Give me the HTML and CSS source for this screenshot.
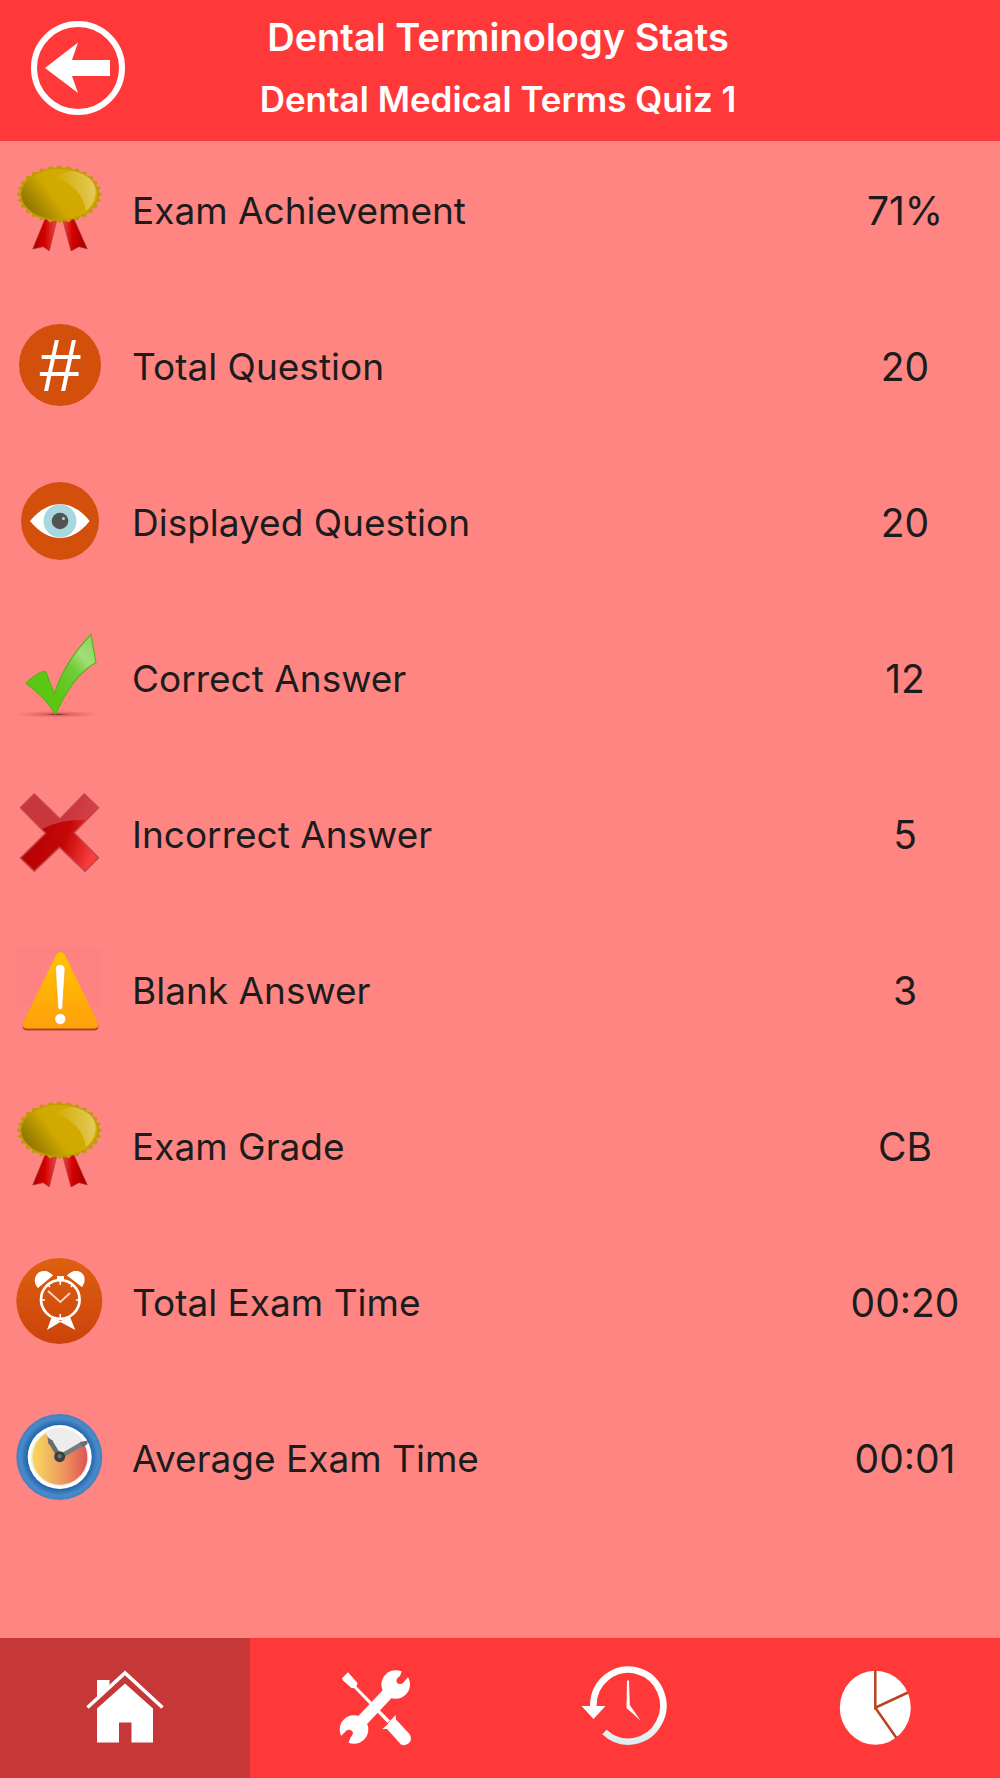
FILE: index.html
```html
<!DOCTYPE html>
<html lang="en">
<head>
    <meta charset="UTF-8">
    <meta name="viewport" content="width=device-width, initial-scale=1.0">
    <title>Dental Terminology Stats</title>
    <link rel="stylesheet" href="styles.css">
</head>

<body>
    <!-- Badge is used twice, so it lives here -->
    <svg class="sprite" aria-hidden="true">
        <defs>
            <linearGradient id="gold" x1="0" y1="0.7" x2="1" y2="0.2">
                <stop offset="0" stop-color="#8a7000"/>
                <stop offset="0.4" stop-color="#d0a800"/>
                <stop offset="1" stop-color="#d6ae00"/>
            </linearGradient>
            <linearGradient id="shine" x1="0" y1="0.5" x2="1" y2="0.4">
                <stop offset="0" stop-color="#fff" stop-opacity="0"/>
                <stop offset="1" stop-color="#fff" stop-opacity="0.35"/>
            </linearGradient>
            <linearGradient id="ribbonLeft">
                <stop offset="0" stop-color="#a80000"/>
                <stop offset="0.5" stop-color="#d40000"/>
                <stop offset="1" stop-color="#e84a4a"/>
            </linearGradient>
            <linearGradient id="ribbonRight">
                <stop offset="0" stop-color="#e84a4a"/>
                <stop offset="0.4" stop-color="#d40000"/>
                <stop offset="1" stop-color="#a00000"/>
            </linearGradient>
            <polygon id="teeth" points="100,0 0,100 -100,0 0,-100"/>
            <symbol id="badge" viewBox="0 0 86 86">
                <path d="M29 54L41 54L33.3 86L27.3 81.7L16.7 84Z" fill="url(#ribbonLeft)" stroke="#a33" stroke-width="0.6"/>
                <path d="M46.5 54L58 54L71.3 84L63 81.7L55 86Z" fill="url(#ribbonRight)" stroke="#a33" stroke-width="0.6"/>
                <g transform="translate(43.3 29.3) scale(0.43 0.29)" fill="#c09a08">
                    <use href="#teeth"/>
                    <use href="#teeth" transform="rotate(12.857)"/>
                    <use href="#teeth" transform="rotate(25.714)"/>
                    <use href="#teeth" transform="rotate(38.571)"/>
                    <use href="#teeth" transform="rotate(51.429)"/>
                    <use href="#teeth" transform="rotate(64.286)"/>
                    <use href="#teeth" transform="rotate(77.143)"/>
                </g>
                <ellipse cx="43.3" cy="29.3" rx="38" ry="25.5" fill="url(#gold)"/>
                <path d="M38 14C52 15 68 28 70 46C82 36 83 20 72 12C62 5 48 4 38 14Z" fill="url(#shine)"/>
            </symbol>
        </defs>
    </svg>

    <header class="header">
        <button class="back-button" type="button" aria-label="Back">
            <svg viewBox="0 0 94 94" width="94" height="94">
                <circle cx="47" cy="47" r="44" fill="none" stroke="#fff" stroke-width="6"/>
                <path d="M14 47L47 21.500L41 39H79V55H41L47 72Z" fill="#fff"/>
            </svg>
        </button>
        <div class="titles">
            <h1>Dental Terminology Stats</h1>
            <h2>Dental Medical Terms Quiz 1</h2>
        </div>
    </header>

    <main class="content">
        <table class="stats">
            <tbody>
                <tr>
                    <td class="icon"><svg viewBox="0 0 86 86"><use href="#badge"/></svg></td>
                    <th scope="row">Exam Achievement</th>
                    <td class="value">71%</td>
                </tr>
                <tr>
                    <td class="icon">
                        <svg viewBox="0 0 86 86">
                            <circle cx="44" cy="44" r="41" fill="#d2500c"/>
                            <text class="hash" x="43" y="70" text-anchor="middle">#</text>
                        </svg>
                    </td>
                    <th scope="row">Total Question</th>
                    <td class="value">20</td>
                </tr>
                <tr>
                    <td class="icon">
                        <svg viewBox="0 0 86 86">
                            <circle cx="44" cy="44" r="39" fill="#d2500c"/>
                            <path d="M14 44C24 32 34 27.300 44 27.300S64 32 73.700 44C64 56 54 61 44 61S24 56 14 44Z" fill="#fff"/>
                            <circle cx="44" cy="44" r="16.500" fill="#a8d8df"/>
                            <circle cx="44" cy="44" r="8.300" fill="#535353"/>
                            <circle cx="47.500" cy="41.500" r="1.500" fill="#ccc"/>
                        </svg>
                    </td>
                    <th scope="row">Displayed Question</th>
                    <td class="value">20</td>
                </tr>
                <tr>
                    <td class="icon">
                        <svg viewBox="0 0 86 86">
                            <defs>
                                <radialGradient id="checkShadow">
                                    <stop offset="0" stop-color="#400" stop-opacity="0.8"/>
                                    <stop offset="0.3" stop-color="#800" stop-opacity="0.25"/>
                                    <stop offset="1" stop-color="#800" stop-opacity="0"/>
                                </radialGradient>
                                <linearGradient id="checkFill" x1="0.4" y1="0.7" x2="1" y2="0.1">
                                    <stop offset="0" stop-color="#5cc713"/>
                                    <stop offset="0.45" stop-color="#6fcd38"/>
                                    <stop offset="0.7" stop-color="#a3de78"/>
                                    <stop offset="1" stop-color="#8bd65c"/>
                                </linearGradient>
                            </defs>
                            <ellipse cx="41" cy="81.300" rx="42" ry="3.500" fill="url(#checkShadow)"/>
                            <path d="M10 50.300Q18 42 27.300 38.300Q29.500 38 30 39.500L38.300 61Q49 28 75 1.500L80 29.500Q56 43 39.700 81.300Q29 64 10 50.300Z" fill="url(#checkFill)" stroke="#55b51c" stroke-width="1.200" stroke-linejoin="round"/>
                        </svg>
                    </td>
                    <th scope="row">Correct Answer</th>
                    <td class="value">12</td>
                </tr>
                <tr>
                    <td class="icon">
                        <svg viewBox="0 0 86 86">
                            <defs>
                                <linearGradient id="crossFill" x1="0" y1="0.7" x2="1" y2="1">
                                    <stop offset="0" stop-color="#b60000"/>
                                    <stop offset="0.5" stop-color="#c40808"/>
                                    <stop offset="0.85" stop-color="#f83c3c"/>
                                </linearGradient>
                            </defs>
                            <path d="M4.500 18.700L18.300 5L44 30L68.300 5L82.500 18.700L58 43.700L82.500 68.700L69 82.300L43.500 58.300L18.300 82.300L4.500 69L29.700 44.300Z" fill="url(#crossFill)" stroke="#c24348" stroke-width="1.500" stroke-linejoin="round"/>
                            <path d="M5 18.700L18.300 5.500L44 30.500L68.300 5.500L82 18.700L69 31Q45 30 26 40Z" fill="#cb4a50" fill-opacity="0.750"/>
                        </svg>
                    </td>
                    <th scope="row">Incorrect Answer</th>
                    <td class="value">5</td>
                </tr>
                <tr>
                    <td class="icon">
                        <svg viewBox="0 0 86 86">
                            <defs>
                                <linearGradient id="warnFill" x1="0" y1="0" x2="0" y2="1">
                                    <stop offset="0" stop-color="#ffc400"/>
                                    <stop offset="1" stop-color="#ff9f0c"/>
                                </linearGradient>
                            </defs>
                            <rect x="0" y="2" width="86" height="60" fill="#ff8283"/>
                            <path d="M40 11Q44.300 4 49 11L82 79Q83.500 85.500 78 85.500H11Q5.500 85.500 7 79Z" fill="#a5491c"/>
                            <path d="M40 10Q44.300 4 49 10L82 78Q83.500 83.500 78 83.500H11Q5.500 83.500 7 78Z" fill="url(#warnFill)"/>
                            <path d="M39.500 24Q39.500 19.500 44.200 19.500T49 24L46.500 63Q44.300 66.500 42 63Z" fill="#fff" stroke="#f59000" stroke-width="0.500"/>
                            <circle cx="44.300" cy="74" r="5.500" fill="#fff" stroke="#f08000" stroke-width="0.500"/>
                        </svg>
                    </td>
                    <th scope="row">Blank Answer</th>
                    <td class="value">3</td>
                </tr>
                <tr>
                    <td class="icon"><svg viewBox="0 0 86 86"><use href="#badge"/></svg></td>
                    <th scope="row">Exam Grade</th>
                    <td class="value">CB</td>
                </tr>
                <tr>
                    <td class="icon">
                        <svg viewBox="0 0 86 86">
                            <defs>
                                <linearGradient id="alarmFill" x1="0" y1="0" x2="0" y2="1">
                                    <stop offset="0" stop-color="#dd6010"/>
                                    <stop offset="1" stop-color="#cb430b"/>
                                </linearGradient>
                            </defs>
                            <circle cx="43.300" cy="44" r="43" fill="url(#alarmFill)"/>
                            <g fill="#fff">
                                <path d="M22 31C16 25 19 14 28 14Q33 14 37 18.500Q26 21 22 31Z"/>
                                <path d="M66 30C71 24 69 14 60 14Q55 14 51 18.500Q62 21 66 30Z"/>
                                <path d="M20 24L22 31L37 18.500L30 14Z"/>
                                <path d="M68 24L66 30L51 18.500L58 14Z"/>
                                <rect x="41" y="19" width="7" height="5"/>
                                <path d="M35.700 60L31 73L44.300 65L59.300 73L54 60L44.300 64Z"/>
                            </g>
                            <circle cx="44.300" cy="42.500" r="19.300" fill="none" stroke="#fff" stroke-width="2.700"/>
                            <path d="M44.300 24V28M44.300 57V61M26 43H29M60 43H63M31 27L34 30M57 27L55 30" stroke="#fff" stroke-width="1.500"/>
                            <path d="M32 34L44.300 45L54 36" fill="none" stroke="#f8d8c4" stroke-width="1.800"/>
                        </svg>
                    </td>
                    <th scope="row">Total Exam Time</th>
                    <td class="value">00:20</td>
                </tr>
                <tr>
                    <td class="icon">
                        <svg viewBox="0 0 86 86">
                            <defs>
                                <radialGradient id="clockRim" cx="0.500" cy="0.500" r="0.500">
                                    <stop offset="0.750" stop-color="#2266ad"/>
                                    <stop offset="0.900" stop-color="#4a8ac8"/>
                                    <stop offset="1" stop-color="#4381c0"/>
                                </radialGradient>
                                <linearGradient id="clockFace">
                                    <stop offset="0" stop-color="#f8da5c"/>
                                    <stop offset="0.500" stop-color="#f0a060"/>
                                    <stop offset="1" stop-color="#df5356"/>
                                </linearGradient>
                            </defs>
                            <circle cx="43.300" cy="44" r="43" fill="url(#clockRim)"/>
                            <circle cx="43.700" cy="44" r="32" fill="#fff"/>
                            <circle cx="43.700" cy="44" r="29" fill="#ededed"/>
                            <path d="M43.700 44L68 31A27.500 27.500 0 1 1 30 20.500Z" fill="url(#clockFace)"/>
                            <path d="M43.700 44L34 28" stroke="#666e70" stroke-width="4.500"/>
                            <path d="M31.500 24L37 28L32.500 31Z" fill="#666e70"/>
                            <path d="M43.700 44L66 31" stroke="#777d7c" stroke-width="4.500"/>
                            <path d="M71.500 27.500L64 29L67 34L71.500 31Z" fill="#666e70"/>
                            <circle cx="43.700" cy="43.700" r="5.500" fill="#3b4143"/>
                            <circle cx="43.700" cy="43.200" r="2" fill="#777"/>
                        </svg>
                    </td>
                    <th scope="row">Average Exam Time</th>
                    <td class="value">00:01</td>
                </tr>
            </tbody>
        </table>
    </main>

    <nav class="tab-bar">
        <button class="tab active" type="button" aria-label="Home">
            <svg viewBox="0 0 90 90">
                <path d="M7.500 44.500L45 10L82.500 44.500" fill="none" stroke="#fff" stroke-width="3.500"/>
                <path d="M17 17H29.500V22L17 34Z" fill="#fff"/>
                <path d="M45 20.500L73 45.500V79.500H51.500V59.500H39V79.500H17V45.500Z" fill="#fff"/>
            </svg>
        </button>
        <button class="tab" type="button" aria-label="Settings">
            <svg viewBox="0 0 90 90">
                <path d="M12 15.300L18 9.300L27.500 20L26.500 23.500L60 57.500L57.500 60L24 25L21.700 25.300L13 17.500Z" fill="#fff"/>
                <path d="M65.700 52L66 56.500L79.500 71Q82 75 80 79Q76 84 71 81.500L57 66L52.300 66L57 62L60 58Z" fill="#fff"/>
                <path d="M28 62L62 26" stroke="#fff" stroke-width="12"/>
                <circle cx="65.700" cy="21.500" r="14.300" fill="#fff"/>
                <circle cx="24" cy="66.500" r="14.300" fill="#fff"/>
                <path class="notch" d="M73 5L70 13Q65 16 67 20Q70 22 73 20L79 13L86 8Z"/>
                <path class="notch" d="M17 84L20.500 74.500Q24.500 70 22 68Q18 65 15 69L9 75L4 82Z"/>
            </svg>
        </button>
        <button class="tab" type="button" aria-label="History">
            <svg viewBox="0 0 90 90">
                <defs>
                    <linearGradient id="historyFill" x1="0" y1="0" x2="0" y2="1">
                        <stop offset="0.600" stop-color="#fff"/>
                        <stop offset="1" stop-color="#dcecf0"/>
                    </linearGradient>
                </defs>
                <path d="M13.300 45V42.500A35 36 0 1 1 24.500 69" fill="none" stroke="url(#historyFill)" stroke-width="6.500"/>
                <path d="M1.500 43H25.500L13.500 56Z" fill="#fff"/>
                <path d="M47 17.500H49L49.800 42L60.500 57.500L46.500 45Z" fill="#fff"/>
            </svg>
        </button>
        <button class="tab" type="button" aria-label="Statistics">
            <svg viewBox="0 0 90 90">
                <ellipse cx="45.300" cy="44.700" rx="35.500" ry="37" fill="#fff"/>
                <path d="M45.300 7V44.700L78 29.500M45.300 44.700L66.500 75" fill="none" stroke="#b9451f" stroke-width="2.500"/>
            </svg>
        </button>
    </nav>
</body>

</html>
```
FILE: styles.css
```css
* {
    box-sizing: border-box;
}

body {
    font-family: Inter, "Liberation Sans", sans-serif;
    background-color: #ff8583;
    color: #1c1c1c;
    margin: 0;
    min-height: 100vh;
    display: flex;
    flex-direction: column;
}

button {
    border: none;
    padding: 0;
    background: none;
    cursor: pointer;
}

svg {
    display: block;
    overflow: visible;
}

.sprite {
    position: absolute;
    width: 0;
    height: 0;
}

.header {
    display: grid;
    grid-template-columns: 156px 1fr 160px;
    align-items: center;
    background-color: #ff3939;
    color: white;
    padding: 6px 0 11px;
}

.back-button {
    justify-self: center;
}

.titles {
    text-align: center;
}

.titles h1,
.titles h2 {
    margin: 0;
    font-weight: 600;
    line-height: 62px;
}

.titles h1 {
    font-size: 38px;
}

.titles h2 {
    font-size: 35px;
}

.content {
    flex: 1;
}

.stats {
    width: 100%;
    border-collapse: collapse;
}

.stats tr {
    height: 156px;
}

.stats td,
.stats th {
    padding: 24px 0 0;
    vertical-align: top;
    font-weight: 400;
    line-height: 92px;
}

.stats th {
    font-size: 37px;
    text-align: left;
}

.stats .icon {
    width: 132px;
    padding-left: 16px;
}

.stats .icon svg {
    width: 86px;
    height: 86px;
}

.stats .value {
    width: 190px;
    font-size: 39px;
    text-align: center;
}

.hash {
    font-family: "Liberation Sans", sans-serif;
    font-size: 74px;
    font-style: italic;
    fill: white;
}

.tab-bar {
    display: flex;
    height: 140px;
    background-color: #ff3939;
}

.tab {
    flex: 1;
    display: flex;
    justify-content: center;
    align-items: center;
}

.tab.active {
    background-color: #c63838;
}

.tab svg {
    width: 90px;
    height: 90px;
}

.notch {
    fill: #ff3939;
}
```
